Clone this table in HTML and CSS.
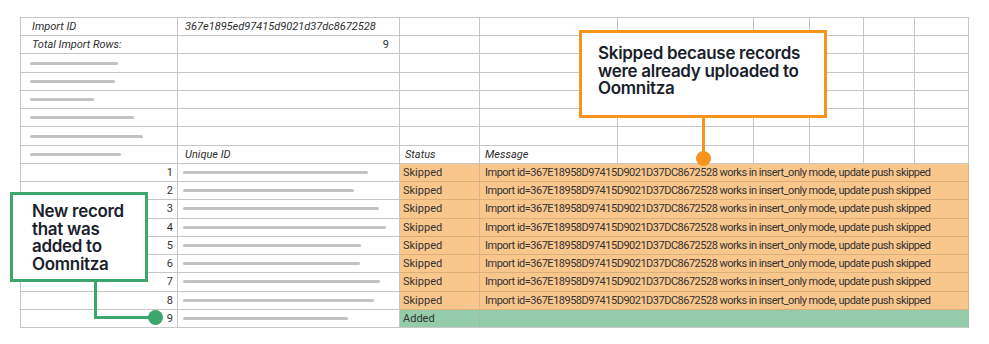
FILE: index.html
```html
<!DOCTYPE html>
<html>
<head>
<meta charset="utf-8">
<link rel="stylesheet" href="styles.css">
</head>
<body>
<div class="stage">
  <div class="sheet">
    <div class="c lbl pl">Import ID</div>
    <div class="c lbl pl2">367e1895ed97415d9021d37dc8672528</div>
    <div class="c"></div><div class="c"></div><div class="c"></div><div class="c"></div><div class="c"></div><div class="c"></div><div class="c"></div>

    <div class="c lbl pl">Total Import Rows:</div>
    <div class="c num pr">9</div>
    <div class="c"></div><div class="c"></div><div class="c"></div><div class="c"></div><div class="c"></div><div class="c"></div><div class="c"></div>

    <div class="c"><span class="bar" style="width:88px"></span></div>
    <div class="c"></div><div class="c"></div><div class="c"></div><div class="c"></div><div class="c"></div><div class="c"></div><div class="c"></div><div class="c"></div>

    <div class="c"><span class="bar" style="width:85px"></span></div>
    <div class="c"></div><div class="c"></div><div class="c"></div><div class="c"></div><div class="c"></div><div class="c"></div><div class="c"></div><div class="c"></div>

    <div class="c"><span class="bar" style="width:64px"></span></div>
    <div class="c"></div><div class="c"></div><div class="c"></div><div class="c"></div><div class="c"></div><div class="c"></div><div class="c"></div><div class="c"></div>

    <div class="c"><span class="bar" style="width:104px"></span></div>
    <div class="c"></div><div class="c"></div><div class="c"></div><div class="c"></div><div class="c"></div><div class="c"></div><div class="c"></div><div class="c"></div>

    <div class="c"><span class="bar" style="width:113px"></span></div>
    <div class="c"></div><div class="c"></div><div class="c"></div><div class="c"></div><div class="c"></div><div class="c"></div><div class="c"></div><div class="c"></div>

    <div class="c"><span class="bar" style="width:91px"></span></div>
    <div class="c lbl pl2">Unique ID</div>
    <div class="c lbl pl3">Status</div>
    <div class="c lbl pl3">Message</div>
    <div class="c"></div><div class="c"></div><div class="c"></div><div class="c"></div><div class="c"></div>

    <div class="c num">1</div><div class="c id"><span class="bar" style="width:185px"></span></div>
    <div class="c st skip">Skipped</div><div class="c msg skip">Import id=367E18958D97415D9021D37DC8672528 works in insert_only mode, update push skipped</div>

    <div class="c num">2</div><div class="c id"><span class="bar" style="width:171px"></span></div>
    <div class="c st skip">Skipped</div><div class="c msg skip">Import id=367E18958D97415D9021D37DC8672528 works in insert_only mode, update push skipped</div>

    <div class="c num">3</div><div class="c id"><span class="bar" style="width:196px"></span></div>
    <div class="c st skip">Skipped</div><div class="c msg skip">Import id=367E18958D97415D9021D37DC8672528 works in insert_only mode, update push skipped</div>

    <div class="c num">4</div><div class="c id"><span class="bar" style="width:203px"></span></div>
    <div class="c st skip">Skipped</div><div class="c msg skip">Import id=367E18958D97415D9021D37DC8672528 works in insert_only mode, update push skipped</div>

    <div class="c num">5</div><div class="c id"><span class="bar" style="width:178px"></span></div>
    <div class="c st skip">Skipped</div><div class="c msg skip">Import id=367E18958D97415D9021D37DC8672528 works in insert_only mode, update push skipped</div>

    <div class="c num">6</div><div class="c id"><span class="bar" style="width:177px"></span></div>
    <div class="c st skip">Skipped</div><div class="c msg skip">Import id=367E18958D97415D9021D37DC8672528 works in insert_only mode, update push skipped</div>

    <div class="c num">7</div><div class="c id"><span class="bar" style="width:197px"></span></div>
    <div class="c st skip">Skipped</div><div class="c msg skip">Import id=367E18958D97415D9021D37DC8672528 works in insert_only mode, update push skipped</div>

    <div class="c num">8</div><div class="c id"><span class="bar" style="width:191px"></span></div>
    <div class="c st skip">Skipped</div><div class="c msg skip">Import id=367E18958D97415D9021D37DC8672528 works in insert_only mode, update push skipped</div>

    <div class="c num">9</div><div class="c id"><span class="bar" style="width:165px"></span></div>
    <div class="c st add">Added</div><div class="c msg add"></div>
  </div>

  <div class="callout orange">Skipped because records were already uploaded to Oomnitza</div>
  <div class="stem orange-stem"></div>
  <div class="dot orange-dot"></div>

  <div class="callout green">New record that was added to Oomnitza</div>
  <div class="stem green-stem"></div>
  <div class="stem green-arm"></div>
  <div class="dot green-dot"></div>
</div>
</body>
</html>
```

FILE: styles.css
```css
html, body {
  margin: 0;
  padding: 0;
  background: #ffffff;
}

.stage {
  position: relative;
  width: 989px;
  height: 344px;
  padding: 17px 0 0 20px;
  box-sizing: border-box;
}

.sheet {
  display: grid;
  grid-template-columns: 157px 222px 80px 138px 136px 56px 54px 51px 54px;
  grid-template-rows: repeat(17, 1fr);
  width: 949px;
  height: 311px;
  box-sizing: border-box;
  border-top: 1px solid #c6c6c6;
  border-left: 1px solid #c6c6c6;
  font-family: Roboto, "Liberation Sans", sans-serif;
  font-size: 11px;
  color: #333333;
}

.c {
  border-right: 1px solid #c6c6c6;
  border-bottom: 1px solid #c6c6c6;
  display: flex;
  align-items: center;
  min-width: 0;
  white-space: nowrap;
  overflow: visible;
}

.lbl {
  font-style: italic;
  color: #2e2e2e;
}

.pl { padding-left: 11px; }
.pl2 { padding-left: 7px; }
.pl3 { padding-left: 5px; }

.num {
  justify-content: flex-end;
  padding-right: 4px;
  color: #333333;
}

.num.pr { padding-right: 10px; }

.bar {
  display: block;
  height: 3px;
  border-radius: 2px;
  background: #c2c2c2;
  margin-left: 9px;
}

.id .bar { margin-left: 5px; }

.st { padding-left: 3px; }

.msg {
  grid-column: 4 / 10;
  padding-left: 5px;
  letter-spacing: -0.5px;
}

.skip {
  background: #f9c68c;
  border-bottom-color: #dcae7a;
  border-right-color: #d9b48a;
}

.add {
  background: #94cbab;
  border-bottom-color: #c6c6c6;
  border-right-color: #9fbfae;
}

.callout {
  position: absolute;
  background: #ffffff;
  box-sizing: border-box;
  font-family: Inter, "Noto Sans", sans-serif;
  font-weight: 600;
  font-size: 17px;
  line-height: 17.6px;
  color: #1b1f2c;
  letter-spacing: -0.3px;
}

.callout.orange {
  left: 579px;
  top: 30px;
  width: 248px;
  height: 88px;
  border: 3px solid #f7941d;
  padding: 12px 16px 0 16px;
}

.callout.green {
  left: 10px;
  top: 192px;
  width: 138px;
  height: 90px;
  border: 3.5px solid #3ca66b;
  padding: 8px 10px 0 19px;
}

.stem {
  position: absolute;
}

.orange-stem {
  left: 702px;
  top: 118px;
  width: 3px;
  height: 40px;
  background: #f7941d;
}

.orange-dot {
  left: 696px;
  top: 151px;
  background: #f7941d;
}

.green-stem {
  left: 94px;
  top: 282px;
  width: 3px;
  height: 37px;
  background: #3ca66b;
}

.green-arm {
  left: 94px;
  top: 316px;
  width: 61px;
  height: 3px;
  background: #3ca66b;
}

.dot {
  position: absolute;
  width: 15px;
  height: 15px;
  border-radius: 50%;
}

.green-dot {
  left: 148px;
  top: 310px;
  background: #3ca66b;
}
```
